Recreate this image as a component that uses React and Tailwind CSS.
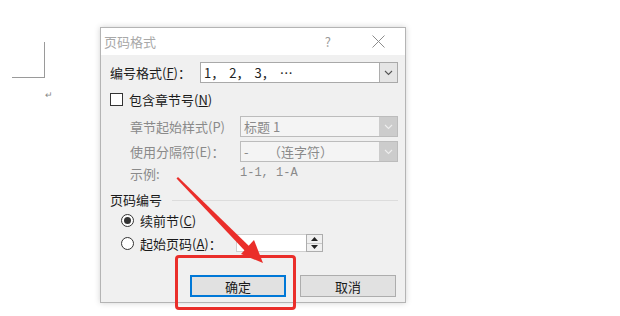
import React from "react";

const font = { fontFamily: '"Noto Sans CJK SC", "Liberation Sans", sans-serif' };

function Chevron({ color = "#555" }) {
  return (
    <svg width="9" height="6" viewBox="0 0 9 6">
      <path d="M1 1 L4.5 4.5 L8 1" fill="none" stroke={color} strokeWidth="1.1" />
    </svg>
  );
}

function Select({ children, disabled }) {
  return (
    <div
      className={`flex-1 h-[21px] flex items-stretch border ${
        disabled ? "border-[#bcbcbc] bg-[#f4f4f4] text-[#8a8a8a]" : "border-[#a9a9a9] bg-white text-[#222]"
      }`}
    >
      <div className="flex-1 flex items-center pl-[3px] text-[13px] leading-none whitespace-pre">{children}</div>
      <div
        className={`w-[18px] flex items-center justify-center border-l ${
          disabled ? "bg-[#cccccc] border-[#cccccc]" : "bg-[#e5e5e5] border-[#adadad]"
        }`}
      >
        <Chevron color={disabled ? "#eeeeee" : "#555"} />
      </div>
    </div>
  );
}

export default function App() {
  return (
    <div className="relative w-[620px] h-[316px] bg-white flex overflow-hidden" style={font}>
      {/* document area */}
      <div className="w-[100px] shrink-0 flex flex-col">
        <div className="ml-[12px] mt-[42px] w-[33px] h-[36px] border-r border-b border-[#9a9a9a]" />
        <div className="ml-[45px] mt-[12px] text-[9px] leading-none text-[#888]">↵</div>
      </div>

      {/* dialog */}
      <div className="mt-[27px] w-[306px] h-[276px] border border-[#b4b4b4] bg-[#f0f0f0] shadow-[0_0_6px_rgba(0,0,0,0.18)] flex flex-col">
        <div className="h-[27px] bg-white flex items-center pl-[3px] text-[13px] text-[#a8a8a8]">
          <span>页码格式</span>
          <span className="ml-auto mr-[41px] text-[13px] text-[#9a9a9a]">?</span>
          <svg className="mr-[20px]" width="13" height="13" viewBox="0 0 13 13">
            <path d="M0.5 0.5 L12.5 12.5 M12.5 0.5 L0.5 12.5" stroke="#8c8c8c" strokeWidth="1" />
          </svg>
        </div>

        <div className="flex-1 flex flex-col pl-[9px] pr-[7px] pt-[7px] text-[13px] text-[#1a1a1a]">
          {/* row 1 */}
          <div className="h-[21px] flex items-center">
            <div className="w-[90px] leading-none">
              编号格式(<u>F</u>)：
            </div>
            <Select>
              1<span className="tracking-[5px]">，</span>2<span className="tracking-[5px]">，</span>3
              <span className="tracking-[5px]">，</span>…
            </Select>
          </div>

          {/* checkbox */}
          <div className="h-[16px] mt-[8px] flex items-center">
            <div className="w-[13px] h-[13px] border border-[#333] bg-white" />
            <span className="ml-[6px] leading-none">
              包含章节号(<u>N</u>)
            </span>
          </div>

          {/* sub rows */}
          <div className="h-[21px] mt-[9px] flex items-center pl-[20px] text-[#8a8a8a]">
            <div className="w-[110px] leading-none">章节起始样式(P)</div>
            <Select disabled>标题 1</Select>
          </div>
          <div className="h-[21px] mt-[4px] flex items-center pl-[20px] text-[#8a8a8a]">
            <div className="w-[110px] leading-none">使用分隔符(E)：</div>
            <Select disabled>
              <span className="w-[24px]">-</span>（连字符）
            </Select>
          </div>
          <div className="h-[16px] mt-[3px] flex items-center pl-[20px] text-[#8a8a8a]">
            <div className="w-[110px] leading-none">示例:</div>
            <span className="leading-none text-[12px]" style={{ fontFamily: '"Liberation Mono", monospace' }}>
              1-1, 1-A
            </span>
          </div>

          {/* group */}
          <div className="h-[16px] mt-[10px] flex items-center">
            <span className="leading-none">页码编号</span>
            <div className="flex-1 ml-[10px] mt-[2px] h-px bg-[#dcdcdc]" />
          </div>

          <div className="h-[16px] mt-[5px] flex items-center pl-[11px]">
            <div className="w-[13px] h-[13px] rounded-full border border-[#333] bg-white flex items-center justify-center">
              <div className="w-[7px] h-[7px] rounded-full bg-[#333]" />
            </div>
            <span className="ml-[6px] leading-none">
              续前节(<u>C</u>)
            </span>
          </div>

          <div className="h-[18px] mt-[6px] flex items-center pl-[11px]">
            <div className="w-[13px] h-[13px] rounded-full border border-[#333] bg-white" />
            <span className="ml-[6px] w-[96px] leading-none">
              起始页码(<u>A</u>)：
            </span>
            <div className="w-[70px] h-[18px] bg-white border border-[#cfcfcf] border-r-0" />
            <div className="w-[17px] h-[18px] flex flex-col border border-[#adadad] bg-[#f0f0f0]">
              <div className="flex-1 flex items-center justify-center border-b border-[#c8c8c8]">
                <svg width="7" height="4" viewBox="0 0 7 4"><path d="M0 4 L3.5 0 L7 4 Z" fill="#222" /></svg>
              </div>
              <div className="flex-1 flex items-center justify-center">
                <svg width="7" height="4" viewBox="0 0 7 4"><path d="M0 0 L3.5 4 L7 0 Z" fill="#222" /></svg>
              </div>
            </div>
          </div>

          {/* buttons */}
          <div className="mt-[23px] flex justify-end pr-[2px] gap-[14px]">
            <div className="w-[96px] h-[22px] flex items-center justify-center bg-[#e1e1e1] border-2 border-[#0078d7] leading-none">
              确定
            </div>
            <div className="w-[96px] h-[22px] flex items-center justify-center bg-[#e1e1e1] border border-[#adadad] leading-none">
              取消
            </div>
          </div>
        </div>
      </div>

      {/* annotation: red box */}
      <div className="absolute left-[175px] top-[255px] w-[121px] h-[55px] border-[3px] border-[#ea2e2a] rounded-[4px]" />
      {/* annotation: arrow */}
      <svg className="absolute left-0 top-0" width="620" height="316" viewBox="0 0 620 316">
        <polygon points="176.5,178.5 178,177 251,248 246,252" fill="#ea2e2a" />
        <polygon points="263,263 241,254 254,240" fill="#ea2e2a" />
      </svg>
    </div>
  );
}
